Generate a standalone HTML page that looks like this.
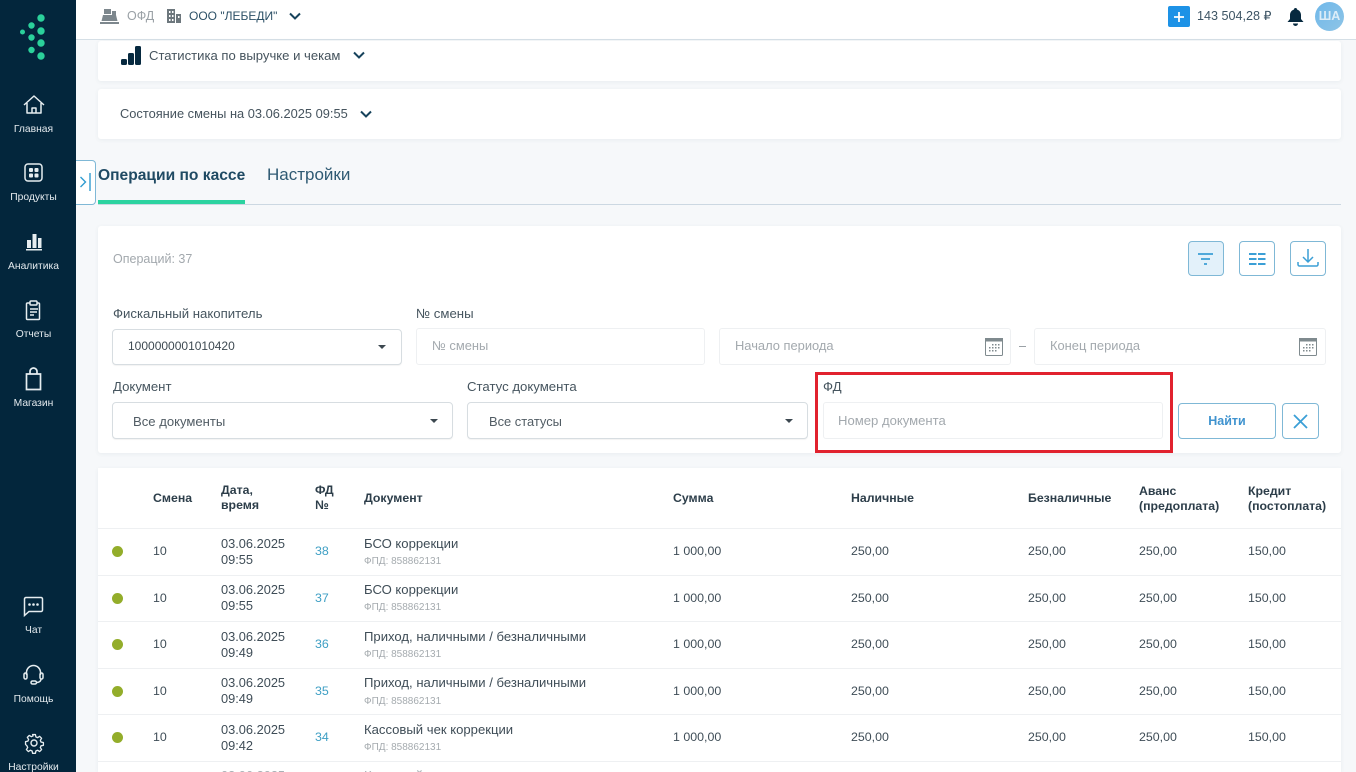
<!DOCTYPE html>
<html lang="ru"><head><meta charset="utf-8"><title>Операции по кассе</title>
<style>
*{box-sizing:border-box}
html,body{margin:0;padding:0;width:1356px;height:772px;overflow:hidden}
body{background:#f6f8fa;font-family:"Liberation Sans",sans-serif;color:#3f4d57;font-size:12.4px}
#w{position:relative;width:1356px;height:772px;overflow:hidden;background:#f6f8fa}
.t{position:absolute;white-space:nowrap;line-height:16px}
.b{position:absolute}
.card{position:absolute;background:#fff;border-radius:3px;box-shadow:0 1px 4px rgba(60,80,100,.07)}
.nav{position:absolute;left:0;width:67px;text-align:center;color:#e4eaee;font-size:10.3px;line-height:12px}
.ic{position:absolute;overflow:visible}
.inp{position:absolute;background:#fff;border:1px solid #eef0f2;border-radius:3px}
.sel{position:absolute;background:#fff;border:1px solid #d7dde1;border-radius:4px;box-shadow:0 1px 1px rgba(0,0,0,.05)}
.ph{color:#a3a9ae;font-size:12.9px}
.lb{color:#46555f;font-size:13.2px}
.caret{position:absolute;width:0;height:0;border-left:4px solid transparent;border-right:4px solid transparent;border-top:4px solid #3c4850}
.btn{position:absolute;background:#fff;border:1.5px solid #7fb8d6;border-radius:4px}
.th{font-weight:bold;color:#2d3e4a;font-size:12.3px;line-height:15px}
.dot{position:absolute;left:112px;width:11px;height:11px;border-radius:50%;background:#93ad2a}
.sep{position:absolute;left:98px;width:1243px;height:1px;background:#eef0f2}
.fd{color:#3e9fc4}
.fp{color:#a5abaf;font-size:10px}
.dt{font-size:12.8px}
.doc{font-size:13.1px}
</style></head><body><div id="w">

<div class="b" style="left:0;top:0;width:76px;height:772px;background:#03263c"></div>
<svg class="ic" style="left:18px;top:12px" width="32" height="52"><g fill="#2bd19b"><circle cx="23" cy="6" r="3.7"/><circle cx="13.5" cy="13.5" r="3.2"/><circle cx="23" cy="19" r="3.7"/><circle cx="4.5" cy="20" r="2.5"/><circle cx="13.5" cy="25.5" r="3.2"/><circle cx="23" cy="31" r="3.7"/><circle cx="13.5" cy="38" r="3.2"/><circle cx="23" cy="44" r="3.7"/></g></svg>

<svg class="ic" style="left:23px;top:95px" width="22" height="20" fill="none" stroke="#e6edf0" stroke-width="1.5" stroke-linejoin="round"><path d="M1 10 11 1l10 9M4 8v10h14V8M9 18v-5h4v5"/></svg>
<div class="nav" style="top:124px">Главная</div>
<svg class="ic" style="left:24px;top:163px" width="20" height="20" fill="none" stroke="#e6edf0" stroke-width="1.5"><rect x="1" y="1" width="17" height="17" rx="3"/><g fill="#e6edf0" stroke="none"><rect x="5" y="5" width="4" height="4" rx="1"/><rect x="10.500" y="5" width="4" height="4" rx="1"/><rect x="5" y="10.500" width="4" height="4" rx="1"/><rect x="10.500" y="10.500" width="4" height="4" rx="1"/></g></svg>
<div class="nav" style="top:192px">Продукты</div>
<svg class="ic" style="left:25px;top:233px" width="18" height="17" fill="#e6edf0"><rect x="2" y="7" width="4" height="8"/><rect x="7.500" y="1" width="4" height="14"/><rect x="13" y="5" width="3.500" height="10"/><rect x="1" y="16" width="16" height="1.500"/></svg>
<div class="nav" style="top:261px">Аналитика</div>
<svg class="ic" style="left:25px;top:300px" width="18" height="21" fill="none" stroke="#e6edf0" stroke-width="1.5"><path d="M5 3H2.500A1 1 0 0 0 1.500 4v14.500a1 1 0 0 0 1 1h11a1 1 0 0 0 1-1V4a1 1 0 0 0-1-1H12"/><rect x="5" y="1" width="7" height="4" rx="1"/><path d="M5 9h8M5 12h7M5 15h4"/></svg>
<div class="nav" style="top:329px">Отчеты</div>
<svg class="ic" style="left:25px;top:367px" width="18" height="24" fill="none" stroke="#e6edf0" stroke-width="1.7"><path d="M1.500 7h14v15.500h-14zM5 7V4.500a3.500 3.500 0 0 1 7 0V7"/></svg>
<div class="nav" style="top:398px">Магазин</div>
<svg class="ic" style="left:23px;top:596px" width="21" height="21" fill="none" stroke="#e6edf0" stroke-width="1.5"><path d="M3 1.500h15a1.500 1.500 0 0 1 1.500 1.500v11a1.500 1.500 0 0 1-1.500 1.500H6l-4.500 4V3A1.500 1.500 0 0 1 3 1.500z"/><g fill="#e6edf0" stroke="none"><circle cx="6.500" cy="8.500" r="1.300"/><circle cx="10.500" cy="8.500" r="1.300"/><circle cx="14.500" cy="8.500" r="1.300"/></g></svg>
<div class="nav" style="top:625px">Чат</div>
<svg class="ic" style="left:23px;top:664px" width="21" height="21" fill="none" stroke="#e6edf0" stroke-width="1.5"><path d="M3.500 11V8.500a7 7 0 0 1 14 0V11"/><rect x="1" y="9" width="3" height="6" rx="1.500"/><rect x="17" y="9" width="3" height="6" rx="1.500"/><path d="M18 15c0 2.500-2.500 3.500-5 3.500"/><rect x="8" y="17" width="5.500" height="3" rx="1.500"/></svg>
<div class="nav" style="top:694px">Помощь</div>
<svg class="ic" style="left:24px;top:733px" width="20" height="20" fill="none" stroke="#e6edf0" stroke-width="1.4" stroke-linejoin="round"><circle cx="10" cy="10" r="3"/><path d="M8.500 1h3l.5 2.500 1.800.8 2.200-1.400 2.100 2.100-1.400 2.200.8 1.800 2.500.5v3l-2.500.5-.8 1.800 1.400 2.200-2.100 2.100-2.200-1.400-1.800.8-.5 2.500h-3l-.5-2.500-1.800-.8-2.200 1.400-2.100-2.100 1.400-2.200-.8-1.800L1 11.500v-3l2.500-.5.800-1.800-1.400-2.200L5 1.900l2.200 1.400L9 2.500z" transform="translate(.6 .6) scale(.94)"/></svg>
<div class="nav" style="top:762px">Настройки</div>

<div class="b" style="left:76px;top:0;width:1280px;height:40px;background:#fff;border-bottom:1px solid #d5dfe6"></div>
<svg class="ic" style="left:100px;top:8px" width="19" height="17" fill="#7d878d"><path d="M3 7h13l1.500 6H1.500z"/><rect x="4" y="1" width="7" height="5"/><rect x="0" y="14" width="19" height="2"/><rect x="12" y="3" width="4" height="4"/></svg>
<div class="t" style="left:127px;top:8px;color:#9aa1a6;font-size:12.5px">ОФД</div>
<svg class="ic" style="left:167px;top:9px" width="14" height="14" fill="#6d777d"><path d="M0 0h8v14H0zM9 5h5v9H9z"/><g fill="#fff"><rect x="2" y="2" width="1.500" height="2"/><rect x="5" y="2" width="1.500" height="2"/><rect x="2" y="6" width="1.500" height="2"/><rect x="5" y="6" width="1.500" height="2"/><rect x="2" y="10" width="1.500" height="2"/><rect x="5" y="10" width="1.500" height="2"/><rect x="11" y="7" width="1.500" height="2"/></g></svg>
<div class="t" style="left:189px;top:8px;color:#2c5066;font-size:12px">ООО "ЛЕБЕДИ"</div>
<svg class="ic" style="left:289px;top:12px" width="12" height="9" fill="none" stroke="#17435c" stroke-width="2"><path d="M1 1.500l5 5 5-5"/></svg>

<div class="b" style="left:1168px;top:6px;width:22px;height:21px;background:#1d92e6;border-radius:2px"></div>
<svg class="ic" style="left:1173px;top:11px" width="12" height="12" stroke="#fff" stroke-width="1.800"><path d="M6 1v10M1 6h10"/></svg>
<div class="t" style="left:1197px;top:8px;color:#3d5464;font-size:12.6px">143 504,28 ₽</div>
<svg class="ic" style="left:1287px;top:8px" width="17" height="18" fill="#06293f"><path d="M8.500 0c1 0 1.500.6 1.500 1.500C12.500 2.300 14 4.500 14 7v4l2.500 3H.500L3 11V7c0-2.500 1.500-4.700 4-5.500C7 .6 7.500 0 8.500 0z"/><path d="M6 15.500h5a2.500 2.500 0 0 1-5 0z"/></svg>
<div class="b" style="left:1315px;top:2px;width:29px;height:29px;border-radius:50%;background:linear-gradient(135deg,#6fb8ea,#8ec4e6);color:#dcedf8;text-align:center;line-height:29px;font-size:12.5px;font-weight:bold">ША</div>

<div class="card" style="left:98px;top:41px;width:1243px;height:40px"></div>
<svg class="ic" style="left:121px;top:46px" width="20" height="20" fill="#06293f"><rect x="0" y="13" width="6" height="6" rx="1.500"/><rect x="7" y="7" width="6" height="12" rx="1.500"/><rect x="14" y="0" width="6" height="19" rx="1.500"/></svg>
<div class="t" style="left:149px;top:48px;font-size:13.1px;color:#46545e">Статистика по выручке и чекам</div>
<svg class="ic" style="left:353px;top:51px" width="12" height="9" fill="none" stroke="#17435c" stroke-width="2"><path d="M1 1.500l5 5 5-5"/></svg>

<div class="card" style="left:98px;top:89px;width:1243px;height:50px"></div>
<div class="t" style="left:120px;top:106px;font-size:12.85px;color:#46545e">Состояние смены на 03.06.2025 09:55</div>
<svg class="ic" style="left:360px;top:110px" width="12" height="9" fill="none" stroke="#17435c" stroke-width="2"><path d="M1 1.500l5 5 5-5"/></svg>

<div class="b" style="left:76px;top:160px;width:20px;height:45px;background:#fff;border:1px solid #7fb8d6;border-left:none;border-radius:0 4px 4px 0"></div>
<svg class="ic" style="left:79px;top:172px" width="14" height="20" fill="none" stroke="#2f9bd0" stroke-width="1.400"><path d="M1.500 5l5 5-5 5"/><path d="M11 1v18"/></svg>
<div class="t" style="left:98px;top:166px;font-size:15.6px;line-height:19px;font-weight:bold;color:#1f4a63">Операции по кассе</div>
<div class="t" style="left:267px;top:165px;font-size:17px;line-height:19px;color:#2f5a73">Настройки</div>
<div class="b" style="left:98px;top:204px;width:1243px;height:1px;background:#ccd8e2"></div>
<div class="b" style="left:98px;top:200px;width:147px;height:4px;background:#2cd3a0"></div>

<div class="card" style="left:98px;top:226px;width:1243px;height:227px"></div>
<div class="t" style="left:113px;top:251px;color:#a2a8ad;font-size:12.5px">Операций: 37</div>
<div class="btn" style="left:1188px;top:241px;width:36px;height:35px;background:#e3f1fa"></div>
<svg class="ic" style="left:1197px;top:252px" width="18" height="14" stroke="#3b9fd6" stroke-width="1.700"><path d="M1 2h15M4 7h9M7 12h3"/></svg>
<div class="btn" style="left:1239px;top:241px;width:36px;height:35px"></div>
<svg class="ic" style="left:1249px;top:252px" width="17" height="14" stroke="#3b9fd6" stroke-width="2"><path d="M0 2h7.500M9 2h7.500M0 7h7.500M9 7h7.500M0 12h7.500M9 12h7.500"/></svg>
<div class="btn" style="left:1290px;top:241px;width:36px;height:35px"></div>
<svg class="ic" style="left:1297px;top:247px" width="22" height="22" fill="none" stroke="#3b9fd6" stroke-width="1.500"><path d="M11 2v13M6 10l5 5 5-5M1 15v2.500A1.500 1.500 0 0 0 2.500 19h17a1.500 1.500 0 0 0 1.500-1.500V15"/></svg>

<div class="t lb" style="left:113px;top:306px">Фискальный накопитель</div>
<div class="sel" style="left:112px;top:329px;width:290px;height:36px"></div>
<div class="t" style="left:128px;top:338px;color:#3e4a52;font-size:12px">1000000001010420</div>
<div class="caret" style="left:378px;top:345px"></div>
<div class="t lb" style="left:416px;top:306px">№ смены</div>
<div class="inp" style="left:416px;top:328px;width:289px;height:37px"></div>
<div class="t ph" style="left:432px;top:338px">№ смены</div>
<div class="inp" style="left:719px;top:328px;width:292px;height:37px"></div>
<div class="t ph" style="left:735px;top:338px">Начало периода</div>
<svg class="ic" style="left:985px;top:338px" width="18" height="18"><rect x=".5" y=".5" width="17" height="17" rx="1" fill="#fff" stroke="#7f8a8e"/><rect x="0" y="0" width="18" height="3.500" fill="#7f8a8e"/><g fill="#7f8a8e"><rect x="7" y="6" width="1.500" height="1.500"/><rect x="10" y="6" width="1.500" height="1.500"/><rect x="13" y="6" width="1.500" height="1.500"/><rect x="4" y="9" width="1.500" height="1.500"/><rect x="7" y="9" width="1.500" height="1.500"/><rect x="10" y="9" width="1.500" height="1.500"/><rect x="13" y="9" width="1.500" height="1.500"/><rect x="4" y="12" width="1.500" height="1.500"/><rect x="7" y="12" width="1.500" height="1.500"/><rect x="10" y="12" width="1.500" height="1.500"/></g></svg>
<div class="b" style="left:1019px;top:346px;width:7px;height:1px;background:#9aa1a6"></div>
<div class="inp" style="left:1034px;top:328px;width:292px;height:37px"></div>
<div class="t ph" style="left:1050px;top:338px">Конец периода</div>
<svg class="ic" style="left:1299px;top:338px" width="18" height="18"><rect x=".5" y=".5" width="17" height="17" rx="1" fill="#fff" stroke="#7f8a8e"/><rect x="0" y="0" width="18" height="3.500" fill="#7f8a8e"/><g fill="#7f8a8e"><rect x="7" y="6" width="1.500" height="1.500"/><rect x="10" y="6" width="1.500" height="1.500"/><rect x="13" y="6" width="1.500" height="1.500"/><rect x="4" y="9" width="1.500" height="1.500"/><rect x="7" y="9" width="1.500" height="1.500"/><rect x="10" y="9" width="1.500" height="1.500"/><rect x="13" y="9" width="1.500" height="1.500"/><rect x="4" y="12" width="1.500" height="1.500"/><rect x="7" y="12" width="1.500" height="1.500"/><rect x="10" y="12" width="1.500" height="1.500"/></g></svg>

<div class="t lb" style="left:113px;top:379px">Документ</div>
<div class="sel" style="left:112px;top:402px;width:341px;height:37px"></div>
<div class="t" style="left:133px;top:414px;color:#515c64;font-size:13.1px">Все документы</div>
<div class="caret" style="left:430px;top:419px"></div>
<div class="t lb" style="left:467px;top:379px">Статус документа</div>
<div class="sel" style="left:467px;top:402px;width:341px;height:37px"></div>
<div class="t" style="left:489px;top:414px;color:#515c64;font-size:12.9px">Все статусы</div>
<div class="caret" style="left:785px;top:419px"></div>

<div class="b" style="left:815px;top:372px;width:358px;height:81px;border:3px solid #e1222e"></div>
<div class="t lb" style="left:823px;top:379px">ФД</div>
<div class="inp" style="left:823px;top:402px;width:340px;height:37px"></div>
<div class="t ph" style="left:838px;top:413px;font-size:13.1px">Номер документа</div>
<div class="btn" style="left:1178px;top:403px;width:98px;height:36px"></div>
<div class="t" style="left:1178px;top:413px;width:98px;text-align:center;color:#3f93cf;font-weight:bold;font-size:12.5px">Найти</div>
<div class="btn" style="left:1282px;top:403px;width:37px;height:36px"></div>
<svg class="ic" style="left:1293px;top:414px" width="15" height="15" fill="none" stroke="#3b9fd6" stroke-width="1.800"><path d="M1 1l13 13M14 1 1 14"/></svg>

<div class="b" style="left:98px;top:468px;width:1243px;height:304px;background:#fff;box-shadow:0 1px 4px rgba(60,80,100,.07)"></div>
<div class="t th" style="left:153px;top:491px">Смена</div>
<div class="t th" style="left:221px;top:483px">Дата,<br>время</div>
<div class="t th" style="left:315px;top:483px">ФД<br>№</div>
<div class="t th" style="left:364px;top:491px">Документ</div>
<div class="t th" style="left:673px;top:491px">Сумма</div>
<div class="t th" style="left:851px;top:491px">Наличные</div>
<div class="t th" style="left:1028px;top:491px">Безналичные</div>
<div class="t th" style="left:1139px;top:484px">Аванс<br>(предоплата)</div>
<div class="t th" style="left:1248px;top:484px">Кредит<br>(постоплата)</div>

<div class="sep" style="top:528px"></div><div class="sep" style="top:575px"></div><div class="sep" style="top:621px"></div><div class="sep" style="top:668px"></div><div class="sep" style="top:714px"></div><div class="sep" style="top:761px"></div>

<div class="dot" style="top:546px"></div><div class="t" style="left:153px;top:543px">10</div><div class="t dt" style="left:221px;top:536px">03.06.2025<br>09:55</div><div class="t fd" style="left:315px;top:543px">38</div><div class="t doc" style="left:364px;top:536px">БСО коррекции</div><div class="t fp" style="left:364px;top:554px">ФПД: 858862131</div><div class="t" style="left:673px;top:543px">1 000,00</div><div class="t" style="left:851px;top:543px">250,00</div><div class="t" style="left:1028px;top:543px">250,00</div><div class="t" style="left:1139px;top:543px">250,00</div><div class="t" style="left:1248px;top:543px">150,00</div>

<div class="dot" style="top:593px"></div><div class="t" style="left:153px;top:590px">10</div><div class="t dt" style="left:221px;top:582px">03.06.2025<br>09:55</div><div class="t fd" style="left:315px;top:590px">37</div><div class="t doc" style="left:364px;top:582px">БСО коррекции</div><div class="t fp" style="left:364px;top:600px">ФПД: 858862131</div><div class="t" style="left:673px;top:590px">1 000,00</div><div class="t" style="left:851px;top:590px">250,00</div><div class="t" style="left:1028px;top:590px">250,00</div><div class="t" style="left:1139px;top:590px">250,00</div><div class="t" style="left:1248px;top:590px">150,00</div>

<div class="dot" style="top:639px"></div><div class="t" style="left:153px;top:636px">10</div><div class="t dt" style="left:221px;top:629px">03.06.2025<br>09:49</div><div class="t fd" style="left:315px;top:636px">36</div><div class="t doc" style="left:364px;top:629px">Приход, наличными / безналичными</div><div class="t fp" style="left:364px;top:647px">ФПД: 858862131</div><div class="t" style="left:673px;top:636px">1 000,00</div><div class="t" style="left:851px;top:636px">250,00</div><div class="t" style="left:1028px;top:636px">250,00</div><div class="t" style="left:1139px;top:636px">250,00</div><div class="t" style="left:1248px;top:636px">150,00</div>

<div class="dot" style="top:686px"></div><div class="t" style="left:153px;top:683px">10</div><div class="t dt" style="left:221px;top:675px">03.06.2025<br>09:49</div><div class="t fd" style="left:315px;top:683px">35</div><div class="t doc" style="left:364px;top:675px">Приход, наличными / безналичными</div><div class="t fp" style="left:364px;top:694px">ФПД: 858862131</div><div class="t" style="left:673px;top:683px">1 000,00</div><div class="t" style="left:851px;top:683px">250,00</div><div class="t" style="left:1028px;top:683px">250,00</div><div class="t" style="left:1139px;top:683px">250,00</div><div class="t" style="left:1248px;top:683px">150,00</div>

<div class="dot" style="top:732px"></div><div class="t" style="left:153px;top:729px">10</div><div class="t dt" style="left:221px;top:722px">03.06.2025<br>09:42</div><div class="t fd" style="left:315px;top:729px">34</div><div class="t doc" style="left:364px;top:722px">Кассовый чек коррекции</div><div class="t fp" style="left:364px;top:740px">ФПД: 858862131</div><div class="t" style="left:673px;top:729px">1 000,00</div><div class="t" style="left:851px;top:729px">250,00</div><div class="t" style="left:1028px;top:729px">250,00</div><div class="t" style="left:1139px;top:729px">250,00</div><div class="t" style="left:1248px;top:729px">150,00</div>

<div class="t dt" style="left:221px;top:768px;color:#a9b0b5">03.06.2025</div><div class="t doc" style="left:364px;top:768px;color:#a9b0b5">Кассовый чек</div>
</div></body></html>
